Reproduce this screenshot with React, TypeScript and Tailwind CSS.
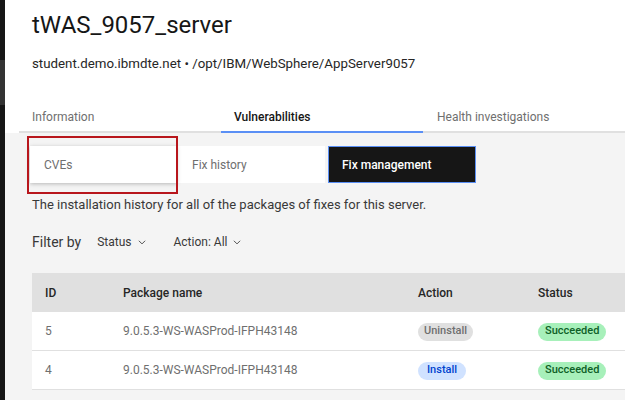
import React from 'react';

// Fix management view of a server's vulnerability page
interface FixRow {
  id: number;
  packageName: string;
  action: 'Install' | 'Uninstall';
  status: string;
}

const rows: FixRow[] = [
  { id: 5, packageName: '9.0.5.3-WS-WASProd-IFPH43148', action: 'Uninstall', status: 'Succeeded' },
  { id: 4, packageName: '9.0.5.3-WS-WASProd-IFPH43148', action: 'Install', status: 'Succeeded' },
];

const Chevron: React.FC = () => (
  <svg width="10" height="10" viewBox="0 0 16 16" className="ml-[5px]" fill="none">
    <path d="M3 6l5 5 5-5" stroke="#393939" strokeWidth="1.4" />
  </svg>
);

const App: React.FC = () => {
  return (
    <div
      className="flex h-[400px] w-full overflow-hidden bg-white"
      style={{ fontFamily: 'Roboto, "Liberation Sans", sans-serif' }}
    >
      <div className="flex w-[5px] shrink-0 flex-col bg-[#161616]">
        <div className="mt-[60px] h-[45px] bg-[#333333]" />
      </div>

      <div className="flex min-w-0 flex-1 flex-col">
        {/* header */}
        <div className="bg-white pl-[27px] pt-[9px]">
          <h1 className="text-[24px] leading-[32px] text-[#161616]">tWAS_9057_server</h1>
          <p className="mt-[13px] text-[13.3px] leading-[20px] text-[#262626]">
            student.demo.ibmdte.net • /opt/IBM/WebSphere/AppServer9057
          </p>
        </div>

        {/* tabs */}
        <div className="ml-[14px] mt-[25px] flex border-b-2 border-[#e0e0e0] bg-white">
          <div className="w-[204px] px-[13px] pb-[4px] pt-[8px] text-[12px] leading-[20px] text-[#6f6f6f]">
            Information
          </div>
          <div className="-mb-[2px] w-[204px] border-b-2 border-[#5a8ff5] px-[13px] pb-[4px] pt-[8px] text-[12px] font-medium leading-[20px] text-[#161616]">
            Vulnerabilities
          </div>
          <div className="w-[204px] px-[14px] pb-[4px] pt-[8px] text-[12px] leading-[20px] text-[#6f6f6f]">
            Health investigations
          </div>
        </div>

        {/* body */}
        <div className="flex-1 bg-[#f4f4f4] pl-[25px] pt-[13px]">
          <div className="flex">
            <div className="relative">
              <div className="flex h-[37px] w-[147px] items-center bg-white pl-[14px] text-[12px] text-[#6f6f6f] shadow-[0_1px_4px_rgba(0,0,0,0.25)]">
                CVEs
              </div>
              <div className="absolute -left-[3px] -top-[10px] h-[58px] w-[151px] border-2 border-[#b8161c]" />
            </div>
            <div className="ml-[1px] flex h-[37px] w-[147px] items-center bg-white pl-[14px] text-[12px] text-[#6f6f6f]">
              Fix history
            </div>
            <div className="ml-[3px] flex h-[37px] w-[148px] items-center border border-[#5a8ff5] bg-[#161616] pl-[13px] text-[12px] font-medium text-white">
              Fix management
            </div>
          </div>

          <p className="ml-[2px] mt-[12px] text-[13px] leading-[20px] text-[#393939]">
            The installation history for all of the packages of fixes for this server.
          </p>

          <div className="ml-[2px] mt-[17px] flex items-center text-[13px] leading-[20px] text-[#393939]">
            <span className="text-[14px]">Filter by</span>
            <span className="ml-[16px] flex items-center text-[12px]">
              Status
              <Chevron />
            </span>
            <span className="ml-[27px] flex items-center text-[12px]">
              Action: All
              <Chevron />
            </span>
          </div>

          <div className="ml-[2px] mt-[21px] text-[12px]">
            <div className="flex h-[39px] items-center bg-[#e0e0e0] font-medium text-[#262626]">
              <div className="w-[78px] pl-[13px]">ID</div>
              <div className="w-[295px] pl-[13px]">Package name</div>
              <div className="w-[120px] pl-[13px]">Action</div>
              <div className="flex-1 pl-[13px]">Status</div>
            </div>
            {rows.map((row) => (
              <div
                key={row.id}
                className="flex h-[39px] items-center border-b border-[#e0e0e0] bg-white text-[#6f6f6f]"
              >
                <div className="w-[78px] pl-[13px]">{row.id}</div>
                <div className="w-[295px] pl-[13px]">{row.packageName}</div>
                <div className="w-[120px] pl-[13px]">
                  <span
                    className={
                      row.action === 'Install'
                        ? 'inline-flex h-[18px] items-center rounded-full bg-[#d0e2ff] px-[9px] text-[11px] font-medium text-[#0043ce]'
                        : 'inline-flex h-[18px] items-center rounded-full bg-[#e0e0e0] px-[6px] text-[11px] font-medium text-[#6f6f6f]'
                    }
                  >
                    {row.action}
                  </span>
                </div>
                <div className="flex-1 pl-[13px]">
                  <span className="inline-flex h-[18px] items-center rounded-full bg-[#a7f0ba] px-[7px] text-[11px] font-medium text-[#0e6027]">
                    {row.status}
                  </span>
                </div>
              </div>
            ))}
          </div>
        </div>
      </div>
    </div>
  );
};

export default App;
